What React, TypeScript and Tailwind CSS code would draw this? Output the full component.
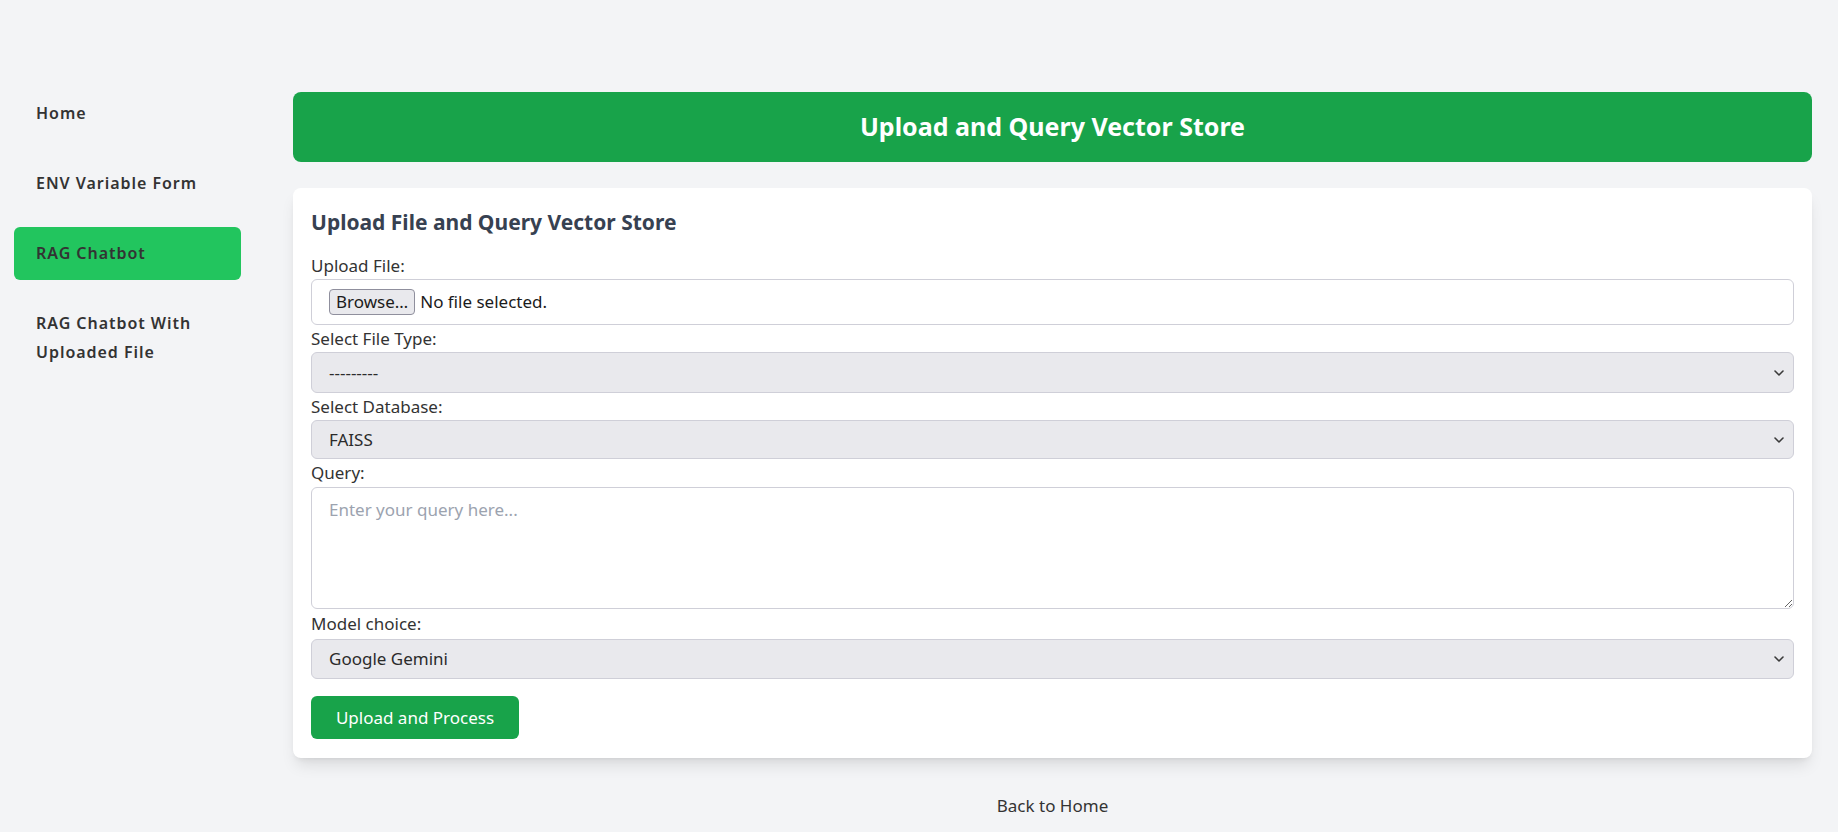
import React from 'react';

const navItems = [
  { label: 'Home', active: false },
  { label: 'ENV Variable Form', active: false },
  { label: 'RAG Chatbot', active: true },
  { label: 'RAG Chatbot With Uploaded File', active: false },
];

const Chevron = () => (
  <svg
    className="pointer-events-none absolute right-[10px] top-1/2 -translate-y-1/2"
    width="10"
    height="6"
    viewBox="0 0 10 6"
    fill="none"
  >
    <path d="M1 1l4 4 4-4" stroke="#3a3a3a" strokeWidth="1.6" strokeLinecap="round" strokeLinejoin="round" />
  </svg>
);

function SelectField({ value, options, h }: { value: string; options: string[]; h: string }) {
  return (
    <div className="relative">
      <select
        defaultValue={value}
        className={`${h} w-full appearance-none rounded-md border border-[#cfcfd8] bg-[#e9e9ed] pl-[17px] pr-8 text-[17px] text-[#2b2b2b] outline-none`}
      >
        {options.map((o) => (
          <option key={o}>{o}</option>
        ))}
      </select>
      <Chevron />
    </div>
  );
}

export default function App() {
  return (
    <div className="min-h-screen bg-[#f3f4f6] font-['Noto_Sans',sans-serif] text-[#333]">
      <div className="flex items-start pt-[87px]">
        {/* Barra lateral */}
        <nav className="ml-[14px] flex w-[227px] shrink-0 flex-col gap-[17px]">
          {navItems.map((item) => (
            <a
              key={item.label}
              href="#"
              className={`block rounded-md px-[22px] py-3 text-base font-semibold leading-[29px] tracking-[0.06em] text-[#333] ${
                item.active ? 'bg-[#22c55e]' : ''
              }`}
            >
              {item.label}
            </a>
          ))}
        </nav>

        {/* Conteúdo principal */}
        <main className="ml-[52px] mr-[26px] flex-1 pt-[5px]">
          <header className="flex h-[70px] items-center justify-center rounded-lg bg-[#18a34a]">
            <h1 className="text-[25px] font-bold text-white">Upload and Query Vector Store</h1>
          </header>

          <section className="mt-[26px] rounded-lg bg-white px-[18px] pb-[19px] pt-[18px] shadow-lg">
            <h2 className="mb-[14px] h-8 text-[21px] font-bold leading-8 text-[#374151]">
              Upload File and Query Vector Store
            </h2>

            <label className="block text-[17px] leading-[27px]">Upload File:</label>
            <div className="flex h-[46px] items-center rounded-md border border-[#cfcfd8] bg-white pl-[17px]">
              <button
                type="button"
                className="h-[26px] rounded-[4px] border border-[#8f8f9d] bg-[#e9e9ed] px-[6px] text-[17px] leading-[24px] text-[#1b1b1b]"
              >
                Browse…
              </button>
              <span className="ml-[5px] text-[17px] text-[#1b1b1b]">No file selected.</span>
            </div>

            <label className="block text-[17px] leading-[27px]">Select File Type:</label>
            <SelectField value="---------" options={['---------', 'PDF', 'TXT', 'CSV']} h="h-[41px]" />

            <label className="block text-[17px] leading-[27px]">Select Database:</label>
            <SelectField value="FAISS" options={['FAISS', 'Chroma']} h="h-[39px]" />

            <label className="block text-[17px] leading-[28px]">Query:</label>
            <textarea
              placeholder="Enter your query here..."
              className="block h-[122px] w-full rounded-md border border-[#cfcfd8] bg-white px-[17px] py-[9px] text-[17px] text-[#333] outline-none placeholder:text-[#9ca3af]"
            />

            <label className="block text-[17px] leading-[30px]">Model choice:</label>
            <SelectField value="Google Gemini" options={['Google Gemini', 'OpenAI']} h="h-[40px]" />

            <button
              type="button"
              className="mt-[17px] h-[43px] w-[208px] rounded-md bg-[#18a34a] text-[17px] text-white"
            >
              Upload and Process
            </button>
          </section>

          <div className="mt-[36px] text-center">
            <a href="#" className="text-[17px] leading-6 text-[#333]">
              Back to Home
            </a>
          </div>
        </main>
      </div>
    </div>
  );
}
